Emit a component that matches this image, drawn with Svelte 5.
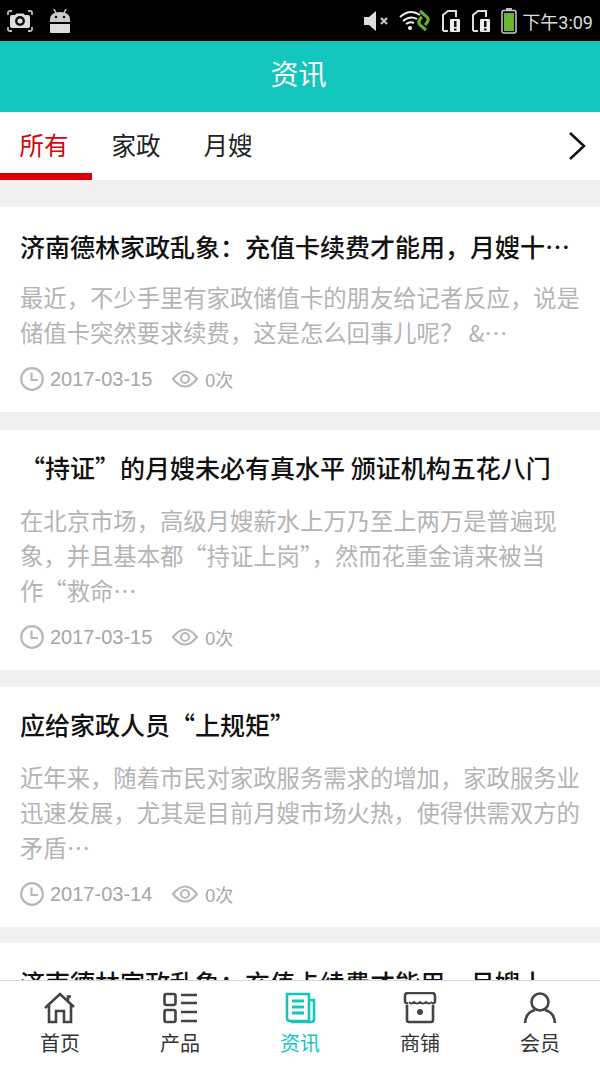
<script>
  const tabs = ['所有', '家政', '月嫂'];
  const news = [
    {
      title: '济南德林家政乱象：充值卡续费才能用，月嫂十…',
      desc: ['最近，不少手里有家政储值卡的朋友给记者反应，说是', '储值卡突然要求续费，这是怎么回事儿呢？ &…'],
      date: '2017-03-15'
    },
    {
      title: '“持证”的月嫂未必有真水平 颁证机构五花八门',
      desc: ['在北京市场，高级月嫂薪水上万乃至上两万是普遍现', '象，并且基本都“持证上岗”，然而花重金请来被当', '作“救命…'],
      date: '2017-03-15'
    },
    {
      title: '应给家政人员“上规矩”',
      desc: ['近年来，随着市民对家政服务需求的增加，家政服务业', '迅速发展，尤其是目前月嫂市场火热，使得供需双方的', '矛盾…'],
      date: '2017-03-14'
    },
    {
      title: '济南德林家政乱象：充值卡续费才能用，月嫂十…',
      desc: [],
      date: ''
    }
  ];
  const navs = [
    { label: '首页', icon: 'home' },
    { label: '产品', icon: 'list' },
    { label: '资讯', icon: 'news', active: true },
    { label: '商铺', icon: 'shop' },
    { label: '会员', icon: 'user' }
  ];
</script>

<div class="page">
  <div class="status">
    <div class="status-left">
      <svg width="26" height="24" viewBox="0 0 26 24">
        <path d="M1 6V3.500Q1 2 3 2H5M21 2H23Q25 2 25 3.500V6M1 18V20.500Q1 22 3 22H5M21 22H23Q25 22 25 20.500V18" fill="none" stroke="#bbb" stroke-width="1.800" />
        <path d="M5 6H8L9.500 4.500H16.500L18 6H21Q23 6 23 8V17Q23 19 21 19H5Q3 19 3 17V8Q3 6 5 6Z" fill="#ddd" />
        <circle cx="13" cy="12" r="5" fill="#111" />
        <circle cx="13" cy="12" r="2.500" fill="#ddd" />
      </svg>
      <svg width="22" height="24" viewBox="0 0 22 24">
        <path d="M1 11Q1 3 11 3Q21 3 21 11V13H1Z" fill="#ccc" />
        <path d="M5 0L7 4M17 0L15 4" stroke="#ccc" stroke-width="1.500" />
        <circle cx="7" cy="8" r="1.300" fill="#111" />
        <circle cx="15" cy="8" r="1.300" fill="#111" />
        <path d="M1 15H21V23Q21 24 20 24H2Q1 24 1 23Z" fill="#ddd" />
      </svg>
    </div>
    <div class="status-right">
      <svg width="26" height="24" viewBox="0 0 26 24">
        <path d="M1 8H6L13 2V22L6 16H1Z" fill="#ddd" />
        <path d="M18 9L24 15M24 9L18 15" stroke="#ccc" stroke-width="2" />
      </svg>
      <svg width="32" height="24" viewBox="0 0 32 24">
        <path d="M1 8Q11 -1 21 6M4 12Q11 6 18 10M7 15Q11 12 15 14" fill="none" stroke="#eee" stroke-width="2" />
        <circle cx="11" cy="19" r="2" fill="#eee" />
        <path d="M21 2L28 8Q31 11 26 16M27 21L21 16Q18 12 23 8" fill="none" stroke="#5fb336" stroke-width="3" />
      </svg>
      <svg width="20" height="24" viewBox="0 0 20 24">
        <path d="M2 22V6L7 2H15V8" fill="none" stroke="#ddd" stroke-width="2" />
        <path d="M2 22H7" stroke="#ddd" stroke-width="2" />
        <rect x="9" y="10" width="10" height="13" rx="1" fill="#eee" />
        <rect x="13" y="12" width="2.500" height="6" fill="#111" />
        <rect x="13" y="19.500" width="2.500" height="2" fill="#111" />
      </svg>
      <svg width="20" height="24" viewBox="0 0 20 24">
        <path d="M2 22V6L7 2H15V8" fill="none" stroke="#ddd" stroke-width="2" />
        <path d="M2 22H7" stroke="#ddd" stroke-width="2" />
        <rect x="9" y="10" width="10" height="13" rx="1" fill="#eee" />
        <rect x="13" y="12" width="2.500" height="6" fill="#111" />
        <rect x="13" y="19.500" width="2.500" height="2" fill="#111" />
      </svg>
      <svg width="16" height="26" viewBox="0 0 16 26">
        <rect x="5" y="0" width="6" height="3" fill="#bbb" />
        <rect x="1" y="2.500" width="14" height="22.500" rx="2" fill="none" stroke="#ccc" stroke-width="1.500" />
        <rect x="3" y="5" width="10" height="18" fill="#69b52f" />
      </svg>
      <span class="clock">下午3:09</span>
    </div>
  </div>

  <header class="head">资讯</header>

  <div class="tabs">
    {#each tabs as tab, i}
      <div class="tab" class:on={i === 0}>{tab}</div>
    {/each}
    <div class="more">
      <svg width="18" height="30" viewBox="0 0 18 30">
        <path d="M2 2L16 15L2 28" fill="none" stroke="#111" stroke-width="2.500" />
      </svg>
    </div>
  </div>

  <main class="list">
    {#each news as item}
      <article class="card">
        <h2>{item.title}</h2>
        {#if item.date}
          <div class="desc">
            {#each item.desc as line}
              <div>{line}</div>
            {/each}
          </div>
          <div class="meta">
            <svg width="24" height="24" viewBox="0 0 24 24">
              <circle cx="12" cy="12" r="10.800" fill="none" stroke="#b8b8b8" stroke-width="2.200" />
              <path d="M11.500 5.500V13H18" fill="none" stroke="#b8b8b8" stroke-width="2.200" />
            </svg>
            <span class="date">{item.date}</span>
            <svg class="eye" width="26" height="18" viewBox="0 0 26 18">
              <path d="M1 9Q13 -6 25 9Q13 24 1 9Z" fill="none" stroke="#b8b8b8" stroke-width="2.200" />
              <circle cx="13" cy="9" r="4" fill="none" stroke="#b8b8b8" stroke-width="2.200" />
            </svg>
            <span class="views">0次</span>
          </div>
        {/if}
      </article>
    {/each}
  </main>

  <nav class="nav">
    {#each navs as n}
      <div class="nav-item" class:active={n.active}>
        <svg width="34" height="32" viewBox="0 0 34 32" fill="none" stroke="currentColor" stroke-width="2.600">
          {#if n.icon === 'home'}
            <path d="M2 16L17 2L31 15M25 9V4.500H28" />
            <path d="M6 13V30H13V19H21V30H28V13" />
          {:else if n.icon === 'list'}
            <rect x="1.500" y="2" width="11" height="11" rx="2" />
            <rect x="1.500" y="18" width="11" height="12" rx="2" />
            <path d="M18 3H34M18 11H34M18 20H34M18 29H34" />
          {:else if n.icon === 'news'}
            <path d="M4 2H26V29H7Q4 29 4 26Z" />
            <path d="M26 8H31V27Q31 30 28 30H8" />
            <path d="M9 9H21M9 15H21M9 21H21" stroke-width="3" />
          {:else if n.icon === 'shop'}
            <path d="M5 1H29Q32 1 32 4V9Q32 12 29 11M5 1Q2 1 2 4V9Q2 12 5 11" />
            <path d="M6 10Q8 13 11 10Q14 13 17 10Q20 13 23 10Q26 13 29 10" stroke-width="1.800" />
            <path d="M4 13V28Q4 30 6 30H28Q30 30 30 28V13" />
            <circle cx="17" cy="20" r="3" fill="currentColor" stroke="none" />
          {:else}
            <circle cx="17" cy="10" r="8.500" />
            <path d="M2 31Q3 20 12 18M32 31Q31 20 22 18" />
          {/if}
        </svg>
        <span>{n.label}</span>
      </div>
    {/each}
  </nav>
</div>

<style>
  :global(body) {
    margin: 0;
    background: #fff;
  }
  .page {
    width: 600px;
    height: 1067px;
    display: flex;
    flex-direction: column;
    overflow: hidden;
    font-family: "Noto Sans CJK SC", "Liberation Sans", sans-serif;
    background: #f0f0f0;
  }
  .status {
    height: 41px;
    flex: none;
    background: #000;
    display: flex;
    align-items: center;
    justify-content: space-between;
    padding: 0 7px;
  }
  .status-left {
    display: flex;
    align-items: center;
    gap: 16px;
  }
  .status-right {
    display: flex;
    align-items: center;
    gap: 10px;
  }
  .clock {
    color: #ddd;
    font-family: "Roboto", "Noto Sans CJK SC", sans-serif;
    font-size: 18px;
    white-space: nowrap;
    margin-left: -5px;
  }
  .head {
    height: 71px;
    flex: none;
    box-sizing: border-box;
    padding-right: 3px;
    background: #12c5bd;
    color: #fff;
    font-size: 28px;
    line-height: 65px;
    text-align: center;
  }
  .tabs {
    height: 68px;
    flex: none;
    display: flex;
    background: #fff;
    position: relative;
  }
  .tab {
    width: 92px;
    padding-right: 4px;
    font-size: 24.500px;
    line-height: 65px;
    text-align: center;
    color: #222;
    box-sizing: border-box;
  }
  .tab.on {
    color: #d9000a;
    border-bottom: 7px solid #d9000a;
  }
  .more {
    margin-left: auto;
    width: 48px;
    display: flex;
    align-items: center;
    padding-left: 16px;
    box-sizing: border-box;
  }
  .list {
    flex: 1;
    min-height: 0;
    overflow: hidden;
    padding-top: 27px;
  }
  .card {
    background: #fff;
    padding: 17px 20px 20px;
    margin-bottom: 17px;
  }
  .card:first-child {
    margin-bottom: 18px;
  }
  .card:nth-child(3) {
    margin-bottom: 16px;
  }
  .card:first-child h2,
  .card:last-child h2 {
    margin: 2px 0 -2px;
  }
  h2 {
    margin: 0;
    font-size: 25px;
    font-weight: 500;
    line-height: 40px;
    color: #111;
    white-space: nowrap;
  }
  .desc {
    margin-top: 16px;
    font-size: 23.330px;
    line-height: 35px;
    color: #b4b4b4;
    white-space: nowrap;
  }
  .meta {
    margin-top: 16px;
    display: flex;
    align-items: center;
    gap: 6px;
    font-family: "Liberation Sans", "Noto Sans CJK SC", sans-serif;
    font-size: 20px;
    color: #a6a6a6;
    height: 26px;
  }
  .date {
    margin-right: 14px;
  }
  .eye {
    margin-right: 1px;
  }
  .views {
    font-size: 18px;
  }
  .nav {
    height: 87px;
    flex: none;
    box-sizing: border-box;
    border-top: 1px solid #d8d8d8;
    background: #fff;
    display: flex;
  }
  .nav-item {
    flex: 1;
    display: flex;
    flex-direction: column;
    align-items: center;
    padding-top: 11px;
    color: #444;
    font-size: 20px;
    line-height: 28px;
    gap: 5px;
  }
  .nav-item span {
    color: #333;
  }
  .nav-item.active,
  .nav-item.active span {
    color: #12c5bd;
  }
</style>
